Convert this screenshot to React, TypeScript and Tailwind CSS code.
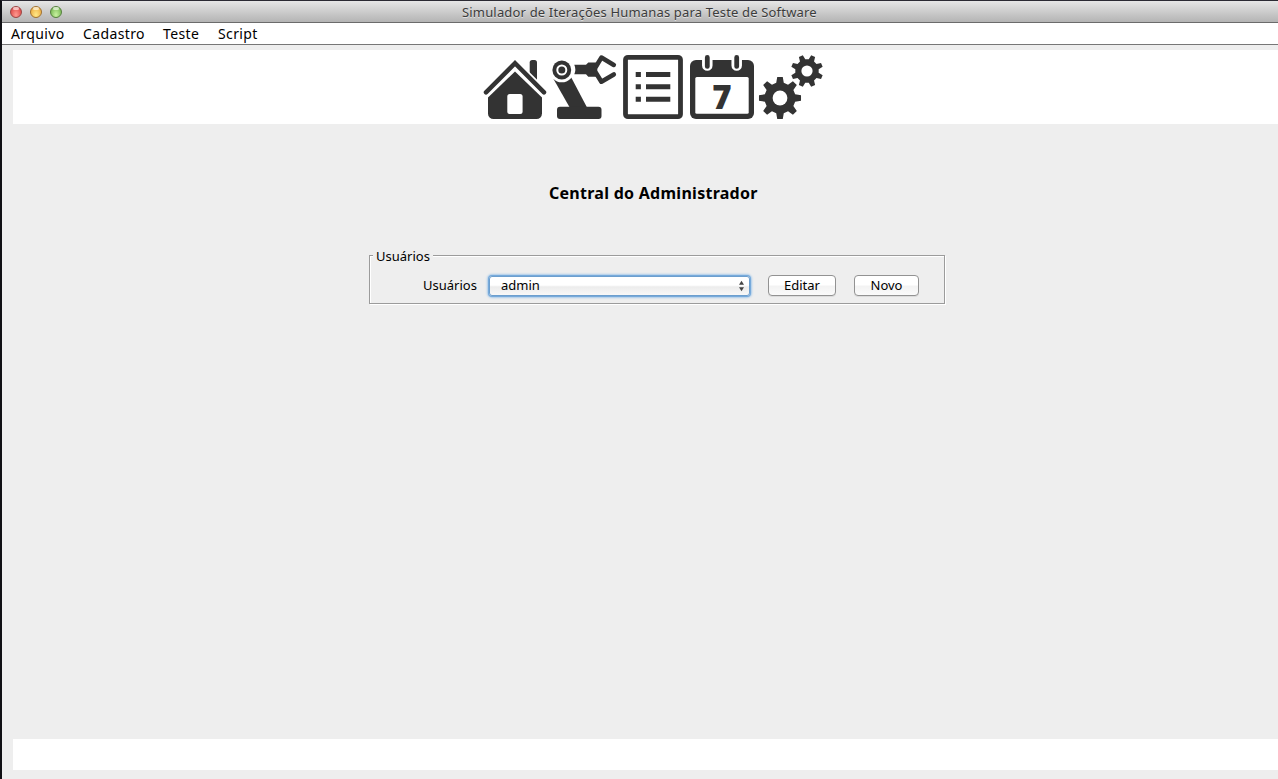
import type { ReactNode } from "react";

const INK = "#333333";

function Icon({ x, w, label, children }: { x: number; w: number; label: string; children: ReactNode }) {
  return (
    <button aria-label={label} className="block shrink-0">
      <svg width={w} height={74} viewBox={`${x} 50 ${w} 74`} fill={INK} className="block">
        {children}
      </svg>
    </button>
  );
}

function Gear({ cx, cy, outer, root, hole, turn }: { cx: number; cy: number; outer: number; root: number; hole: number; turn: number }) {
  const points: string[] = [];
  for (let i = 0; i < 8; i++) {
    const mid = i * 45 + turn - 90;
    const corners: [number, number][] = [
      [-14, root],
      [-7.5, outer],
      [7.5, outer],
      [14, root],
    ];
    for (const [a, r] of corners) {
      const t = ((mid + a) * Math.PI) / 180;
      points.push(`${(cx + r * Math.cos(t)).toFixed(2)},${(cy + r * Math.sin(t)).toFixed(2)}`);
    }
  }
  return (
    <>
      <polygon points={points.join(" ")} />
      <circle cx={cx} cy={cy} r={hole} fill="#fff" />
    </>
  );
}

function Light({ tone }: { tone: string }) {
  return (
    <span className={`relative block h-3 w-3 rounded-full border ${tone}`}>
      <span className="absolute left-[2px] top-0 h-[3px] w-[6px] rounded-full bg-white/60" />
    </span>
  );
}

function PushButton({ children, size }: { children: ReactNode; size: string }) {
  return (
    <button
      className={`h-[21px] rounded-[4px] border border-[#929292] bg-linear-to-b from-white from-45% via-[#f3f3f3] via-55% to-[#fbfbfb] text-[13px] leading-[19px] shadow-[0_1px_0_#dcdcdc] ${size}`}
    >
      {children}
    </button>
  );
}

export default function App() {
  return (
    <div className="flex h-[779px] w-[1278px] flex-col overflow-hidden border-l-2 border-t border-l-[#101014] border-t-[#2b2a33] bg-[#eeeeee] font-['Noto_Sans','Open_Sans',sans-serif] text-black">
      <header className="grid h-[22px] shrink-0 grid-cols-[460px_356px_1fr] items-center rounded-tl-[4px] border-b border-[#6b6b6b] bg-linear-to-b from-[#e6e6e6] to-[#b4b4b4]">
        <div className="flex gap-2 pl-2">
          <Light tone="border-[#9b4543] bg-radial-[at_50%_80%] from-[#ff9a90] to-[#d93b3b]" />
          <Light tone="border-[#a0712f] bg-radial-[at_50%_80%] from-[#ffe987] to-[#e9a237]" />
          <Light tone="border-[#55803d] bg-radial-[at_50%_80%] from-[#c9f3a0] to-[#69ad46]" />
        </div>
        <h1 className="whitespace-nowrap pt-px text-[13px] leading-[20px] tracking-[0.17px] text-[#3c3c3c] [text-shadow:0_1px_0_#e2e2e2]">
          Simulador de Iterações Humanas para Teste de Software
        </h1>
      </header>

      <nav className="flex h-[22px] shrink-0 items-center border-b border-[#777] bg-white pl-[9px] text-[14px] leading-[20px] tracking-[0.38px]">
        <span className="w-[72px]">Arquivo</span>
        <span className="w-[80px]">Cadastro</span>
        <span className="w-[55px]">Teste</span>
        <span>Script</span>
      </nav>

      <div className="ml-[11px] mt-[5px] flex h-[74px] shrink-0 bg-white pl-[469px]">
        <Icon x={482} w={68} label="Início">
          <path d="M529.7 80V62.5a2.5 2.5 0 0 1 2.5-2.5h2.3a2.5 2.5 0 0 1 2.5 2.5V86Z" />
          <path d="M486 93 515 64l29 29" fill="none" stroke="#fff" strokeWidth="9" />
          <path d="M515 71.5 542 97.5V113.5a5.5 5.5 0 0 1-5.5 5.5h-43a5.5 5.5 0 0 1-5.5-5.5V97.5Z" />
          <path d="M486 92.3 515 63.2l29 29.1" fill="none" stroke={INK} strokeWidth="4.5" strokeLinecap="round" />
          <rect x="507.3" y="94" width="15.3" height="20" rx="2.5" fill="#fff" />
        </Icon>
        <Icon x={550} w={70} label="Robô">
          <path d="M553.5 79 571 77 587.3 108H570Z" />
          <circle cx="561.8" cy="70" r="12.3" fill="#fff" />
          <circle cx="561.8" cy="70" r="9.4" />
          <circle cx="561.8" cy="70" r="4.5" fill="none" stroke="#fff" strokeWidth="2" />
          <rect x="557" y="106.7" width="44.5" height="12.3" rx="3" />
          <path d="M574.3 64.8H586l2.3-2.3h7.5l1.5 3v8l-1.5 3.2h-7.5l-2.3-2.4h-11.7a12 12 0 0 0 0-9.5Z" />
          <path d="M596 66.5 601.4 57.6 613.8 64.9M596 73 601.4 81.7 613.8 74.4" fill="none" stroke={INK} strokeWidth="4.6" strokeLinejoin="round" strokeLinecap="round" />
        </Icon>
        <Icon x={620} w={67} label="Lista">
          <rect x="625.5" y="57.3" width="55" height="59.4" rx="2.5" fill="none" stroke={INK} strokeWidth="4.8" />
          <path d="M635.7 72h5.2v5h-5.2zM646 72h24.3v5H646zM635.7 84.3h5.2v5h-5.2zM646 84.3h24.3v5H646zM635.7 96.7h5.2v5h-5.2zM646 96.7h24.3v5H646z" />
        </Icon>
        <Icon x={687} w={69} label="Calendário">
          <rect x="690" y="60" width="64" height="59" rx="6" />
          <rect x="695.3" y="77" width="53.4" height="36.8" rx="1.5" fill="#fff" />
          <path d="M707.3 58v7.5M736.7 58v7.5" stroke="#fff" strokeWidth="10.5" strokeLinecap="round" />
          <path d="M707.3 57.4v9M736.7 57.4v9" stroke={INK} strokeWidth="4.8" strokeLinecap="round" />
          <text x="722" y="109" textAnchor="middle" fontSize="33" fontWeight="800" className="font-['Open_Sans',sans-serif]">
            7
          </text>
        </Icon>
        <Icon x={756} w={70} label="Configurações">
          <Gear cx={780} cy={98} outer={21.2} root={15.6} hole={7.4} turn={0} />
          <Gear cx={807} cy={71} outer={16.2} root={11.8} hole={5.6} turn={22.5} />
        </Icon>
      </div>

      <main className="flex flex-1 flex-col pl-[367px]">
        <h2 className="ml-[180px] mt-[57px] whitespace-nowrap text-[16px] font-bold leading-[24px] tracking-[0.27px]">Central do Administrador</h2>
        <fieldset className="mt-[42px] h-[57px] w-[576px]">
          <div className="mt-[8px] h-[49px] border border-[#9b9b9b] shadow-[1px_1px_0_#fff,inset_1px_1px_0_#fff]">
            <div className="-mt-[9px] ml-[3px] w-[60px] bg-[#eeeeee] pl-[3px] text-[13px] leading-[18px]">Usuários</div>
            <div className="mt-[10px] flex h-[21px] items-center pl-[53px] text-[13px] leading-[19px]">
              <label className="w-[66px]">Usuários</label>
              <div className="flex h-[20px] w-[261px] items-center justify-between rounded-[3px] border border-[#6d9fce] bg-linear-to-b from-white from-45% via-[#ececec] via-55% to-[#f8f8f8] pl-[11px] pr-[4px] shadow-[0_0_0_1px_#77aadb,0_0_2px_2px_#a9cbea]">
                <span>admin</span>
                <svg width="7" height="12" viewBox="0 0 7 12" fill="#444">
                  <path d="M3.5 0.7 6 4.7H1ZM3.5 11.3 6 7.3H1Z" />
                </svg>
              </div>
              <div className="ml-[18px] flex gap-[18px]">
                <PushButton size="w-[68px]">Editar</PushButton>
                <PushButton size="w-[65px]">Novo</PushButton>
              </div>
            </div>
          </div>
        </fieldset>
      </main>

      <footer className="mb-[9px] ml-[11px] h-[31px] shrink-0 bg-white" />
    </div>
  );
}
